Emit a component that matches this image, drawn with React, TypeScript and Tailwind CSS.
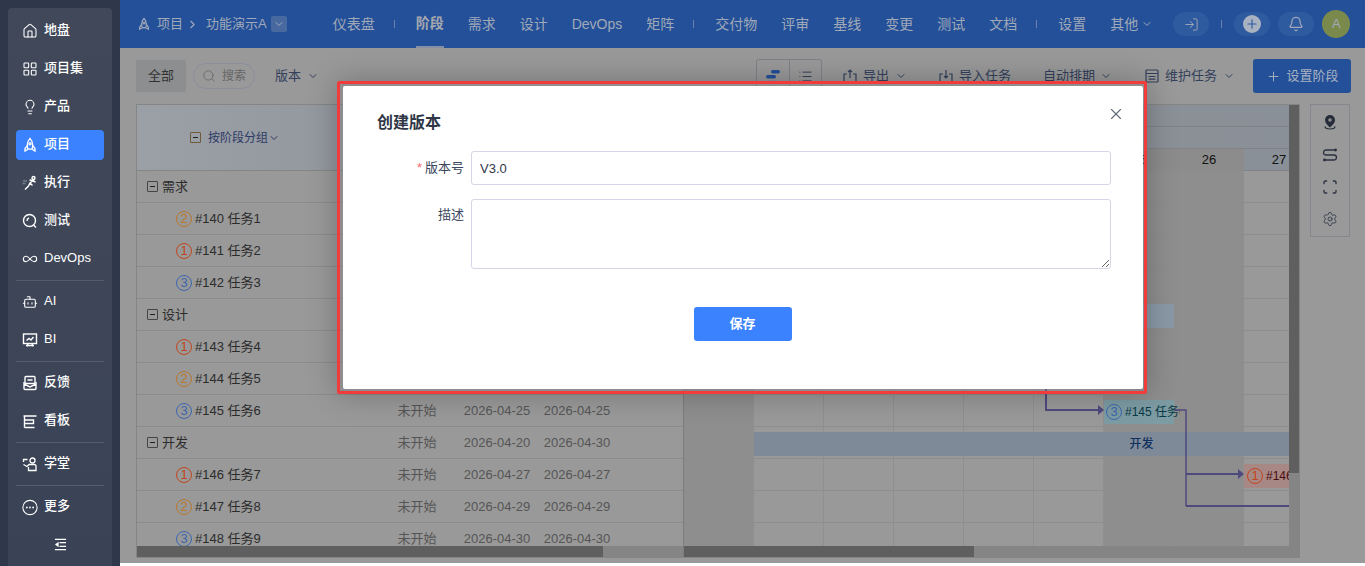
import React from "react";
import {
  Bell,
  Bot,
  ChevronDown,
  ChevronRight,
  Infinity as InfinityIcon,
  House,
  LayoutGrid,
  Lightbulb,
  List,
  LogIn,
  Plus,
  Scan,
  Search,
  Settings,
  X,
} from "lucide-react";

const Rocket = ({ className = "" }: { className?: string }) => (
  <svg viewBox="0 0 16 16" fill="none" stroke="currentColor" strokeWidth="1.3" className={className}>
    <path d="M8 1.500c2 2 2.700 4.300 2.700 6.500 0 1.500-.3 3-.7 4.200H6c-.4-1.200-.7-2.700-.7-4.200C5.300 5.800 6 3.500 8 1.500Z" />
    <circle cx="8" cy="6.800" r="1.100" />
    <path d="M5.400 8.500 3 11.500v2.500l3-1.800M10.600 8.500l2.400 3v2.500l-3-1.800" />
  </svg>
);

const Runner = ({ className = "" }: { className?: string }) => (
  <svg viewBox="0 0 16 16" fill="none" stroke="currentColor" strokeWidth="1.4" className={className}>
    <circle cx="11.500" cy="3" r="1.500" />
    <path d="M3 14.500 6.500 11 8 8l3-2.500-3.500-.5M8 8l2.500 2.500M11 6l2.500 1" />
    <path d="M1 6h4M.5 8.500h3" stroke="#77808f" />
  </svg>
);

const QuerySearch = ({ className = "" }: { className?: string }) => (
  <svg viewBox="0 0 16 16" fill="none" stroke="currentColor" strokeWidth="1.4" className={className}>
    <circle cx="7.500" cy="7.500" r="6" />
    <path d="m11.500 12 2.500 2.500M5 8a3 3 0 0 1 2-3" />
  </svg>
);

const Inbox = ({ className = "" }: { className?: string }) => (
  <svg viewBox="0 0 16 16" fill="none" stroke="currentColor" strokeWidth="1.4" className={className}>
    <rect x="3" y="1.500" width="10" height="7" rx="1" />
    <path d="M5.500 5h5M2 7v6.500a1 1 0 0 0 1 1h10a1 1 0 0 0 1-1V7M2 9l6 3 6-3" />
  </svg>
);

const Board = ({ className = "" }: { className?: string }) => (
  <svg viewBox="0 0 16 16" fill="none" stroke="currentColor" strokeWidth="1.4" className={className}>
    <path d="M1.500 3h13M2.500 3v11.500M2.500 7h9v3.500h-9M2.500 14.500h10" />
  </svg>
);

const Teacher = ({ className = "" }: { className?: string }) => (
  <svg viewBox="0 0 16 16" fill="none" stroke="currentColor" strokeWidth="1.3" className={className}>
    <circle cx="10.500" cy="4.500" r="2.500" />
    <path d="M1.500 6V3.500h4M1.500 8.500 5 10.500l2-2h5.500a1.500 1.500 0 0 1 1.500 1.500v4.500H6.500V11" />
  </svg>
);

const Board2 = ({ className = "" }: { className?: string }) => (
  <svg viewBox="0 0 16 16" fill="none" stroke="currentColor" strokeWidth="1.4" className={className}>
    <rect x="1.500" y="2" width="13" height="9.500" />
    <path d="M4 13.500h8M6 11.500 5 14.500M10 11.500l1 3M4.500 8.500l2.500-2 2 1.500 2.500-3" />
  </svg>
);

const MoreCircle = () => (
  <svg viewBox="0 0 18 18" fill="none" stroke="currentColor" strokeWidth="1.200" className="w-[17px] h-[17px]">
    <circle cx="9" cy="9" r="8" />
    <circle cx="5.500" cy="9" r="1" fill="currentColor" stroke="none" />
    <circle cx="9" cy="9" r="1" fill="currentColor" stroke="none" />
    <circle cx="12.500" cy="9" r="1" fill="currentColor" stroke="none" />
  </svg>
);

const CollapseIcon = () => (
  <svg viewBox="0 0 14 14" fill="none" stroke="currentColor" strokeWidth="1.300" className="w-[13px] h-[13px]">
    <path d="M1 1.500h12M6 5h7M6 9h7M1 12.500h12" />
    <path d="M5 4v6L1 7z" fill="currentColor" stroke="none" />
  </svg>
);

const PinFilled = () => (
  <svg viewBox="0 0 16 16" className="w-4 h-4">
    <path d="M8 1a5 5 0 0 0-5 5c0 3 3 5.500 5 7.500 2-2 5-4.500 5-7.500a5 5 0 0 0-5-5Z" fill="#262c3a" />
    <circle cx="8" cy="6" r="1.800" fill="#8f8f8f" />
    <path d="M3.500 12.500c-1.500 1.500 1.500 2.500 4.500 2.500s6-1 4.500-2.500" fill="none" stroke="#262c3a" strokeWidth="1.100" />
  </svg>
);

const Swap = () => (
  <svg viewBox="0 0 16 16" fill="none" stroke="#2b3242" strokeWidth="1.300" className="w-4 h-4 mt-px">
    <path d="M13.500 3H4a2.500 2.500 0 0 0 0 5h8a2.500 2.500 0 0 1 0 5H2.500" />
    <circle cx="13.500" cy="3" r=".8" fill="#2b3242" />
    <circle cx="2.500" cy="13" r=".8" fill="#2b3242" />
  </svg>
);

const GanttIcon = () => (
  <svg viewBox="0 0 14 14" className="w-[14px] h-[14px]" fill="#245099">
    <rect x="5" y="1" width="9" height="3.500" rx="1.700" />
    <rect x="0" y="6" width="10" height="3.500" rx="1.700" />
    <rect x="3" y="11.500" width="8" height="1.500" fill="#7c8aa0" />
  </svg>
);

const TrayIcon = ({ down = false }: { down?: boolean }) => (
  <svg viewBox="0 0 14 14" fill="none" stroke="#33405c" strokeWidth="1.200" className="w-[14px] h-[14px] shrink-0">
    <path d="M4 5H1v8h12V5h-3" />
    <path d={down ? "M7 1v8M5 7l2 2 2-2" : "M7 9V1M5 3l2-2 2 2"} />
  </svg>
);

const TableIcon = () => (
  <svg viewBox="0 0 14 14" fill="none" stroke="#33405c" strokeWidth="1.200" className="w-[14px] h-[14px] shrink-0">
    <rect x="1" y="1" width="12" height="12" rx="1" />
    <path d="M1 4.500h12M3.500 7.500h7M3.500 10.200h7" />
  </svg>
);

const sideGroups = [
  [
    { label: "地盘", icon: <House className="w-4 h-4" strokeWidth={1.6} /> },
    { label: "项目集", icon: <LayoutGrid className="w-4 h-4" strokeWidth={1.6} /> },
    { label: "产品", icon: <Lightbulb className="w-4 h-4" strokeWidth={1.6} /> },
    { label: "项目", icon: <Rocket className="w-4 h-4" />, active: true },
    { label: "执行", icon: <Runner className="w-4 h-4" /> },
    { label: "测试", icon: <QuerySearch className="w-4 h-4" /> },
    { label: "DevOps", icon: <InfinityIcon className="w-4 h-4" strokeWidth={1.6} /> },
  ],
  [
    { label: "AI", icon: <Bot className="w-4 h-4" strokeWidth={1.6} /> },
    { label: "BI", icon: <Board2 className="w-4 h-4" /> },
  ],
  [
    { label: "反馈", icon: <Inbox className="w-4 h-4" /> },
    { label: "看板", icon: <Board className="w-4 h-4" /> },
  ],
  [{ label: "学堂", icon: <Teacher className="w-4 h-4" /> }],
  [{ label: "更多", icon: <MoreCircle /> }],
];

const navItems = ["仪表盘", "|", "阶段", "需求", "设计", "DevOps", "矩阵", "|", "交付物", "评审", "基线", "变更", "测试", "文档", "|", "设置"];

const rows = [
  { group: "需求" },
  { pri: 2, name: "#140 任务1", start: "2026-04-20", end: "2026-04-20" },
  { pri: 1, name: "#141 任务2", start: "2026-04-21", end: "2026-04-21" },
  { pri: 3, name: "#142 任务3", start: "2026-04-22", end: "2026-04-22" },
  { group: "设计" },
  { pri: 1, name: "#143 任务4", start: "2026-04-23", end: "2026-04-23" },
  { pri: 2, name: "#144 任务5", start: "2026-04-24", end: "2026-04-24" },
  { pri: 3, name: "#145 任务6", start: "2026-04-25", end: "2026-04-25" },
  { group: "开发", start: "2026-04-20", end: "2026-04-30" },
  { pri: 1, name: "#146 任务7", start: "2026-04-27", end: "2026-04-27" },
  { pri: 2, name: "#147 任务8", start: "2026-04-29", end: "2026-04-29" },
  { pri: 3, name: "#148 任务9", start: "2026-04-30", end: "2026-04-30" },
];

const priColor: Record<number, string> = {
  1: "border-[#c2451e] text-[#c2451e]",
  2: "border-[#b9782c] text-[#b9782c]",
  3: "border-[#3c67ae] text-[#3c67ae]",
};

const days = [
  { d: 19, off: true },
  { d: 20 },
  { d: 21 },
  { d: 22 },
  { d: 23 },
  { d: 24 },
  { d: 25, off: true },
  { d: 26, off: true },
  { d: 27 },
];

const Pri = ({ n }: { n: number }) => (
  <span className={`inline-flex items-center justify-center rounded-full border shrink-0 w-[16px] h-[16px] text-[13px] ${priColor[n]}`}>
    {n}
  </span>
);

const MinusBox = ({ color = "border-[#444]" }: { color?: string }) => (
  <span className={`w-[11px] h-[11px] border ${color} rounded-[1px] flex items-center justify-center shrink-0`}>
    <span className="w-[5px] h-px bg-[#222]" />
  </span>
);

const Sidebar = () => (
  <aside className="w-[120px] shrink-0 h-full bg-[#2e384a] pl-2 pr-2 pt-2">
    <div className="h-full bg-gradient-to-b from-[#414859] to-[#3a4356] rounded-t-[4px] px-2 pt-2">
      {sideGroups.map((group, i) => (
        <div key={i} className={i > 0 ? "border-t border-[#555c6c] mt-[6px] pt-[6px]" : ""}>
          <div className="flex flex-col gap-2">
            {group.map((item) => (
              <div
                key={item.label}
                className={`h-[30px] flex items-center gap-[6px] pl-[6px] rounded-[4px] text-white text-[13px] font-medium ${
                  item.active ? "bg-[#3b82ff]" : ""
                }`}
              >
                <span className="w-4 flex justify-center">{item.icon}</span>
                <span className="pb-[2px]">{item.label}</span>
              </div>
            ))}
          </div>
        </div>
      ))}
      <div className="flex justify-center mt-[16px] text-white">
        <CollapseIcon />
      </div>
    </div>
  </aside>
);

const TopBar = () => (
  <header className="h-12 shrink-0 bg-[#245099] flex items-center pl-[17px] text-[#a0a9b8] text-[14px] whitespace-nowrap">
    <Rocket className="w-[14px] h-[14px]" />
    <span className="ml-[6px] text-[13px]">项目</span>
    <ChevronRight className="w-[13px] h-[13px] ml-[3px]" />
    <span className="ml-[7px] text-[13px]">功能演示A</span>
    <span className="ml-[4px] w-4 h-4 bg-[#47699f] rounded-[2px] flex items-center justify-center">
      <ChevronDown className="w-3 h-3" />
    </span>
    <nav className="ml-[46px] flex items-center gap-6 h-full">
      {navItems.map((item, i) =>
        item === "|" ? (
          <span key={i} className="w-px h-[8px] bg-[#6d85ad] -ml-[5px] -mr-[3px]" />
        ) : item === "阶段" ? (
          <span key={i} className="h-full flex items-center border-b-2 border-[#8590a4] font-bold text-[#a4a8ae]">
            {item}
          </span>
        ) : (
          <span key={i}>{item}</span>
        ),
      )}
      <span className="flex items-center gap-[3px]">
        其他
        <ChevronDown className="w-3 h-3" />
      </span>
    </nav>
    <span className="ml-[20px] w-9 h-6 rounded-full bg-[#2e5a9f] flex items-center justify-center">
      <LogIn className="w-[15px] h-[15px]" strokeWidth={1.5} />
    </span>
    <span className="ml-[12px] w-px h-[8px] bg-[#6d85ad]" />
    <span className="ml-[12px] w-9 h-6 rounded-full bg-[#2e5a9f] flex items-center justify-center">
      <span className="w-[18px] h-[18px] rounded-full bg-[#a9b2c0] flex items-center justify-center">
        <Plus className="w-[14px] h-[14px] text-[#2e5a9f]" strokeWidth={2} />
      </span>
    </span>
    <span className="ml-2 w-9 h-6 rounded-full bg-[#2e5a9f] flex items-center justify-center">
      <Bell className="w-4 h-4" strokeWidth={1.8} />
    </span>
    <span className="ml-2 w-7 h-7 rounded-full bg-[#7a8a4c] flex items-center justify-center text-[13px]">A</span>
  </header>
);

const Toolbar = () => (
  <div className="h-[34px] mt-[11px] flex items-center text-[13px] text-[#33405c] whitespace-nowrap">
    <span className="w-[50px] h-8 shrink-0 bg-[#8c8e90] rounded-[2px] flex items-center justify-center text-[#333]">全部</span>
    <span className="ml-[7px] w-[62px] h-[26px] shrink-0 rounded-full border border-[#8a8d9c] flex items-center pl-[8px] gap-[6px] text-[12px] text-[#666]">
      <Search className="w-[14px] h-[14px]" strokeWidth={1.4} />
      搜索
    </span>
    <span className="ml-5 flex items-center gap-[6px]">
      版本
      <ChevronDown className="w-3 h-3" />
    </span>
    <span className="ml-[437px] w-[66px] h-[34px] shrink-0 border border-[#7e8188] rounded-[3px] flex">
      <span className="flex-1 flex items-center justify-center border-r border-[#7e8188]">
        <GanttIcon />
      </span>
      <span className="flex-1 flex items-center justify-center">
        <List className="w-[15px] h-[15px]" strokeWidth={1.6} />
      </span>
    </span>
    <span className="ml-[21px] flex items-center gap-[6px]">
      <TrayIcon />
      导出
      <ChevronDown className="w-3 h-3" />
    </span>
    <span className="ml-[32px] flex items-center gap-[6px]">
      <TrayIcon down />
      导入任务
    </span>
    <span className="ml-[32px] flex items-center gap-[5px]">
      自动排期
      <ChevronDown className="w-3 h-3" />
    </span>
    <span className="ml-[33px] flex items-center gap-[6px]">
      <TableIcon />
      维护任务
      <ChevronDown className="w-3 h-3" />
    </span>
    <span className="ml-[18px] w-[98px] h-[34px] shrink-0 rounded-[3px] bg-[#245099] flex items-center justify-center gap-[6px] text-[#a9b2c0]">
      <Plus className="w-[15px] h-[15px]" strokeWidth={1.5} />
      设置阶段
    </span>
  </div>
);

const LeftTable = () => (
  <div className="w-[547px] shrink-0 border-r border-[#7d7d7d] flex flex-col h-full">
    <div className="h-[66px] shrink-0 border-b border-[#858585] bg-gradient-to-r from-[#9b9fa6] to-[#878b92] flex items-center pl-[53px] text-[12px] text-[#2d3a66]">
      <MinusBox color="border-[#6f5a3c]" />
      <span className="ml-[7px]">按阶段分组</span>
      <ChevronDown className="w-3 h-3" />
    </div>
    <div className="flex-1 overflow-hidden">
      {rows.map((r, i) => (
        <div
          key={i}
          className="h-8 shrink-0 border-b border-[#8b8b8b] grid grid-cols-[250px_60px_10px_80px_80px] items-center text-[13px] text-[#555]"
        >
          {r.group ? (
            <span className="pl-[10px] flex items-center gap-[4px] text-[#2c2c2c]">
              <MinusBox />
              {r.group}
            </span>
          ) : (
            <span className="pl-[39px] flex items-center gap-[3px] text-[#2c2c2c]">
              <Pri n={r.pri as number} />
              {r.name}
            </span>
          )}
          {r.start ? <span className="text-center">未开始</span> : <span />}
          <span />
          <span className="text-center">{r.start}</span>
          <span className="text-center">{r.end}</span>
        </div>
      ))}
    </div>
    <div className="h-[11px] shrink-0 bg-[#858585]">
      <div className="w-[466px] h-full bg-[#5f5f5f]" />
    </div>
  </div>
);

const GanttChart = () => (
  <div className="flex-1 min-w-0 flex flex-col h-full relative overflow-hidden">
    <div className="h-[22px] shrink-0 border-b border-[#7f8288] bg-gradient-to-r from-[#8d9198] to-[#8a9097]" />
    <div className="h-[22px] shrink-0 border-b border-[#7f8288] bg-gradient-to-r from-[#8d9198] to-[#8a9097]" />
    <div className="h-[22px] shrink-0 flex text-[13px] text-[#111]">
      {days.map((c) => (
        <div
          key={c.d}
          className={`w-[70px] shrink-0 flex items-center justify-center ${
            c.off ? "bg-[#8c8c8c]" : "bg-[#8a9097] border-b border-[#7f8288]"
          }`}
        >
          {c.d}
        </div>
      ))}
    </div>
    <div className="flex-1 overflow-hidden">
      {rows.map((_, i) => (
        <div key={i} className="h-8 flex border-b border-[#8d8d8d]">
          {days.map((c) => (
            <div
              key={c.d}
              className={`w-[70px] shrink-0 border-r border-[#8f8f8f] ${c.off ? "bg-[#8e8e8e]" : "bg-[#999999]"}`}
            />
          ))}
        </div>
      ))}
    </div>
    <div className="h-[11px] shrink-0 bg-[#858585]">
      <div className="w-[290px] h-full bg-[#5f5f5f]" />
    </div>

    {/* bars and links sit on the chart by date */}
    <div className="absolute left-[70px] top-[199px] w-[420px] h-6 bg-[#8a98a6]" />
    <div className="absolute left-[70px] top-[327px] w-[775px] h-6 pb-px bg-[#7e8a97] flex items-center justify-center text-[12px] text-[#10305f] font-medium">
      开发
    </div>
    <div className="absolute left-[420px] top-[295px] w-[76px] h-6 bg-[linear-gradient(90deg,#7d9ba3_70px,transparent_70px)] flex items-center pl-[2px] gap-[3px] text-[12px] text-[#063a44] overflow-hidden whitespace-nowrap">
      <Pri n={3} />
      #145 任务6
    </div>
    <div className="absolute left-[560px] top-[359px] w-[70px] h-6 bg-[#a88885] flex items-center pl-[3px] gap-[3px] text-[12px] text-[#4a0b0b] overflow-hidden whitespace-nowrap">
      <Pri n={1} />
      #146 任务7
    </div>
    <svg className="absolute left-0 top-0 w-[605px] h-[454px] pointer-events-none" fill="none" stroke="#4f4a7e" strokeWidth="2">
      <path d="M362 280v25h52" />
      <path d="M414 300l6 5-6 5z" fill="#4f4a7e" stroke="none" />
      <path d="M490 305h12v96" strokeWidth="1.500" />
      <path d="M502 369h52" />
      <path d="M554 364l6 5-6 5z" fill="#4f4a7e" stroke="none" />
      <path d="M502 401h103" />
    </svg>
  </div>
);

const Scrollbar = () => (
  <div className="w-[10px] shrink-0 bg-[#858585]">
    <div className="h-[368px] bg-[#5f5f5f]" />
  </div>
);

const SideTools = () => (
  <div className="ml-[10px] w-10 h-[133px] shrink-0 border border-[#85868e] flex flex-col items-center pt-[9px] gap-[16px] text-[#2b3242]">
    <PinFilled />
    <Swap />
    <Scan className="w-4 h-4" strokeWidth={2} />
    <Settings className="w-4 h-4" strokeWidth={1.2} />
  </div>
);

const VersionDialog = () => (
  <div className="absolute left-[337px] top-[81px] w-[810px] h-[313px] border-[3px] border-[#f03c3c] rounded-[2px] pl-[3px] pt-[2px] pr-px pb-[2px] bg-[#7d7d7d]/40 shadow-[0_0_30px_rgba(0,0,0,0.25)]">
    <div className="w-full h-full bg-white rounded-[2px] relative pl-[34px] pr-[32px] pt-[26px]">
      <h2 className="text-[16px] font-bold text-[#2f3747] leading-[22px]">创建版本</h2>
      <X className="absolute right-[18px] top-[19px] w-[18px] h-[18px] text-[#626a79]" strokeWidth={1.5} />
      <form className="mt-[17px] text-[13px] text-[#3c4760]">
        <div className="flex items-center gap-[7px]">
          <label className="w-[87px] text-right">
            <span className="text-[#f56c6c] mr-[3px]">*</span>版本号
          </label>
          <input
            readOnly
            value="V3.0"
            className="flex-1 h-[34px] border border-[#d6d6e8] rounded-[3px] px-2 text-[13px] text-[#2f3747] outline-none"
          />
        </div>
        <div className="flex items-start gap-[7px] mt-[14px]">
          <label className="w-[87px] text-right pt-[6px]">描述</label>
          <textarea readOnly className="flex-1 h-[70px] border border-[#d6d6e8] rounded-[3px] px-2 py-1 outline-none" />
        </div>
        <div className="flex justify-center mt-[38px] pr-[3px]">
          <button type="button" className="w-[98px] h-[34px] bg-[#3b82ff] rounded-[3px] text-white text-[13px] font-bold">
            保存
          </button>
        </div>
      </form>
    </div>
  </div>
);

export default function App() {
  return (
    <div className="relative w-[1365px] h-[566px] overflow-hidden flex bg-white font-['Liberation_Sans','Noto_Sans_CJK_SC',sans-serif]">
      <Sidebar />
      <main className="flex-1 min-w-0 h-[563px] bg-[#999999] flex flex-col">
        <TopBar />
        <div className="flex-1 min-h-0 pl-4 flex flex-col">
          <Toolbar />
          <div className="mt-[11px] h-[454px] flex items-start">
            <div className="w-[1164px] h-full border border-[#858585] flex shrink-0">
              <LeftTable />
              <GanttChart />
              <Scrollbar />
            </div>
            <SideTools />
          </div>
        </div>
      </main>
      <VersionDialog />
    </div>
  );
}
